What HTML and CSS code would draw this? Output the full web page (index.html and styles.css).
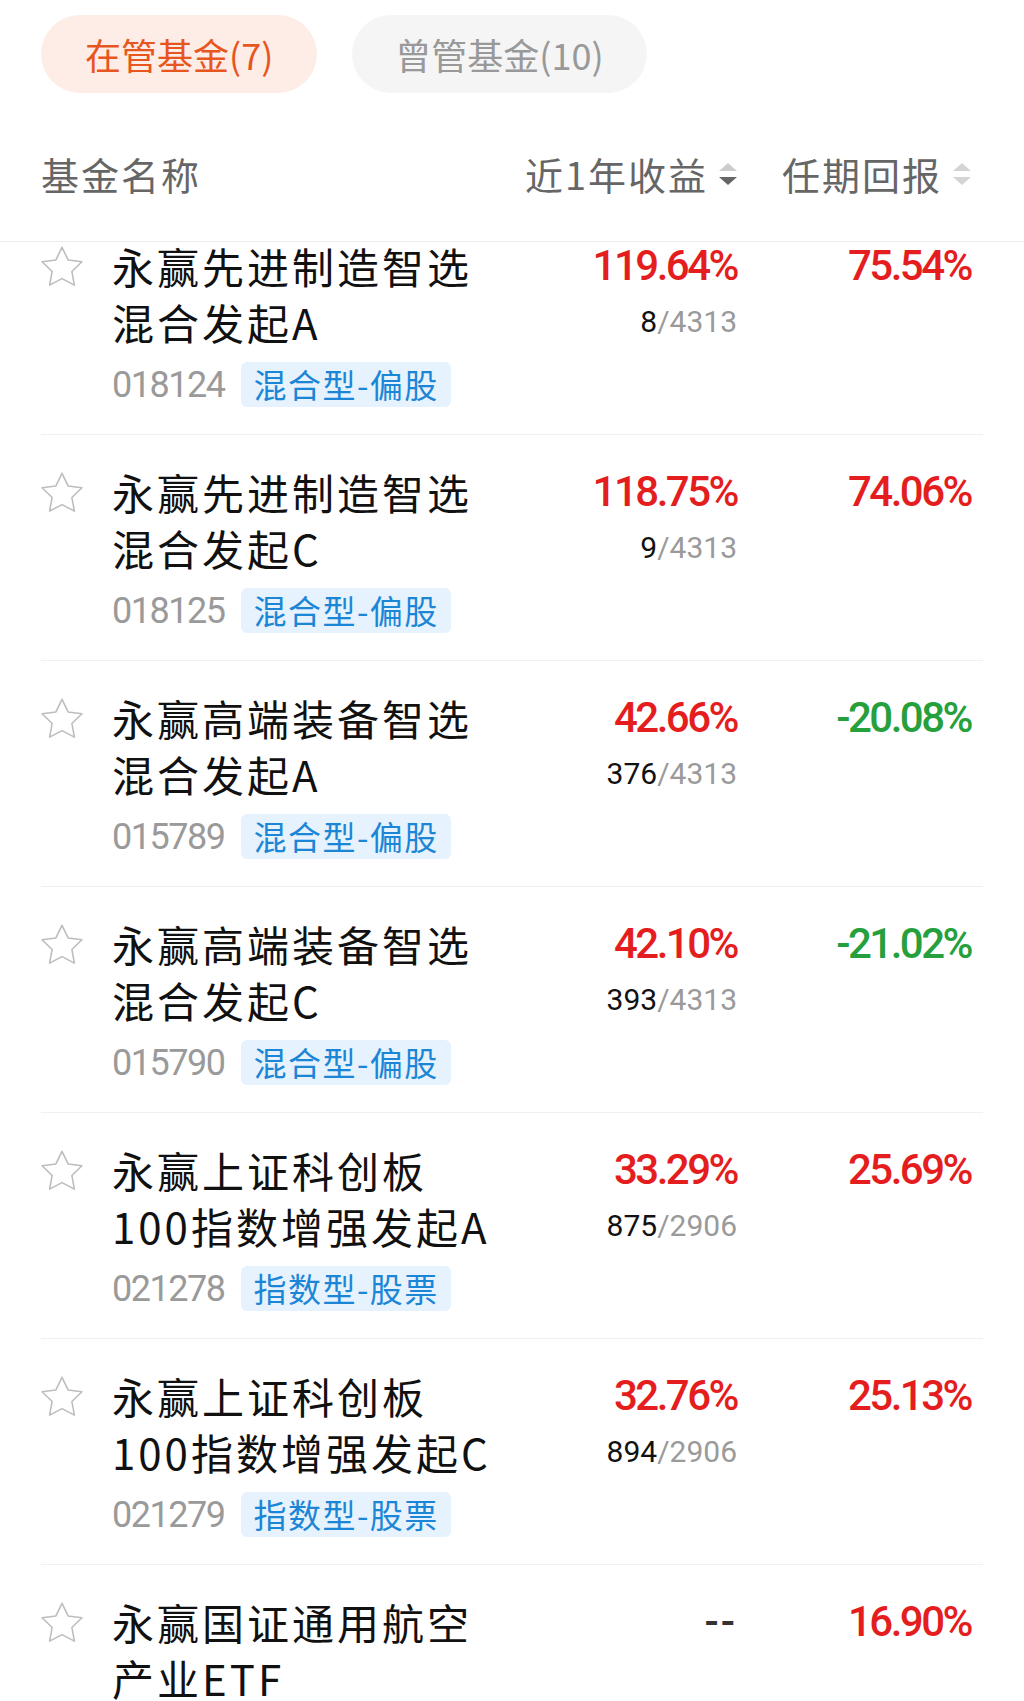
FILE: index.html
```html
<!DOCTYPE html>
<html lang="zh-CN">
<head>
    <meta charset="UTF-8">
    <meta name="viewport" content="width=device-width, initial-scale=1.0">
    <title>基金经理 - 管理基金</title>
    <link rel="stylesheet" href="styles.css">
</head>
<body>
    <header class="top">
        <div class="tabs">
            <span class="tab activo">在管基金(7)</span>
            <span class="tab">曾管基金(10)</span>
        </div>
        <div class="thead">
            <span class="h-name">基金名称</span>
            <span class="h-col">近1年收益
                <svg class="sort" viewBox="0 0 18 22"><path d="M9 0L18 8H0z" fill="#cccccc"/><path d="M0 14H18L9 22z" fill="#666666"/></svg>
            </span>
            <span class="h-col h-ret">任期回报
                <svg class="sort" viewBox="0 0 18 22"><path d="M9 0L18 8H0z" fill="#d4d4d4"/><path d="M0 14H18L9 22z" fill="#d4d4d4"/></svg>
            </span>
        </div>
    </header>

    <div class="lista">
        <div class="row">
            <div class="star"><svg viewBox="2 2 20 19"><path d="M12 2.6l2.9 6 6.6.9-4.8 4.6 1.2 6.5L12 17.5l-5.9 3.1 1.2-6.5-4.8-4.6 6.6-.9z"/></svg></div>
            <div class="info">
                <div class="name">永赢先进制造智选<br>混合发起A</div>
                <div class="meta"><span class="code">018124</span><span class="tag">混合型-偏股</span></div>
            </div>
            <div class="col"><div class="val up">119.64%</div><div class="rank"><b>8</b>/4313</div></div>
            <div class="col ret"><div class="val up">75.54%</div></div>
        </div>

        <div class="row">
            <div class="star"><svg viewBox="2 2 20 19"><path d="M12 2.6l2.9 6 6.6.9-4.8 4.6 1.2 6.5L12 17.5l-5.9 3.1 1.2-6.5-4.8-4.6 6.6-.9z"/></svg></div>
            <div class="info">
                <div class="name">永赢先进制造智选<br>混合发起C</div>
                <div class="meta"><span class="code">018125</span><span class="tag">混合型-偏股</span></div>
            </div>
            <div class="col"><div class="val up">118.75%</div><div class="rank"><b>9</b>/4313</div></div>
            <div class="col ret"><div class="val up">74.06%</div></div>
        </div>

        <div class="row">
            <div class="star"><svg viewBox="2 2 20 19"><path d="M12 2.6l2.9 6 6.6.9-4.8 4.6 1.2 6.5L12 17.5l-5.9 3.1 1.2-6.5-4.8-4.6 6.6-.9z"/></svg></div>
            <div class="info">
                <div class="name">永赢高端装备智选<br>混合发起A</div>
                <div class="meta"><span class="code">015789</span><span class="tag">混合型-偏股</span></div>
            </div>
            <div class="col"><div class="val up">42.66%</div><div class="rank"><b>376</b>/4313</div></div>
            <div class="col ret"><div class="val down">-20.08%</div></div>
        </div>

        <div class="row">
            <div class="star"><svg viewBox="2 2 20 19"><path d="M12 2.6l2.9 6 6.6.9-4.8 4.6 1.2 6.5L12 17.5l-5.9 3.1 1.2-6.5-4.8-4.6 6.6-.9z"/></svg></div>
            <div class="info">
                <div class="name">永赢高端装备智选<br>混合发起C</div>
                <div class="meta"><span class="code">015790</span><span class="tag">混合型-偏股</span></div>
            </div>
            <div class="col"><div class="val up">42.10%</div><div class="rank"><b>393</b>/4313</div></div>
            <div class="col ret"><div class="val down">-21.02%</div></div>
        </div>

        <div class="row">
            <div class="star"><svg viewBox="2 2 20 19"><path d="M12 2.6l2.9 6 6.6.9-4.8 4.6 1.2 6.5L12 17.5l-5.9 3.1 1.2-6.5-4.8-4.6 6.6-.9z"/></svg></div>
            <div class="info">
                <div class="name">永赢上证科创板<br>100指数增强发起A</div>
                <div class="meta"><span class="code">021278</span><span class="tag">指数型-股票</span></div>
            </div>
            <div class="col"><div class="val up">33.29%</div><div class="rank"><b>875</b>/2906</div></div>
            <div class="col ret"><div class="val up">25.69%</div></div>
        </div>

        <div class="row">
            <div class="star"><svg viewBox="2 2 20 19"><path d="M12 2.6l2.9 6 6.6.9-4.8 4.6 1.2 6.5L12 17.5l-5.9 3.1 1.2-6.5-4.8-4.6 6.6-.9z"/></svg></div>
            <div class="info">
                <div class="name">永赢上证科创板<br>100指数增强发起C</div>
                <div class="meta"><span class="code">021279</span><span class="tag">指数型-股票</span></div>
            </div>
            <div class="col"><div class="val up">32.76%</div><div class="rank"><b>894</b>/2906</div></div>
            <div class="col ret"><div class="val up">25.13%</div></div>
        </div>

        <div class="row">
            <div class="star"><svg viewBox="2 2 20 19"><path d="M12 2.6l2.9 6 6.6.9-4.8 4.6 1.2 6.5L12 17.5l-5.9 3.1 1.2-6.5-4.8-4.6 6.6-.9z"/></svg></div>
            <div class="info">
                <div class="name">永赢国证通用航空<br>产业ETF</div>
            </div>
            <div class="col"><div class="val nada">--</div></div>
            <div class="col ret"><div class="val up">16.90%</div></div>
        </div>
    </div>
</body>
</html>
```

FILE: styles.css
```css
body {
    margin: 0;
    background-color: #fff;
    font-family: "Noto Sans CJK SC", "Noto Sans", sans-serif;
    color: #111;
    overflow: hidden;
}
.top {
    padding-top: 15px;
    border-bottom: 1px solid #ededed;
}
.tabs {
    display: flex;
    gap: 35px;
    padding: 0 41px;
}
.tab {
    height: 78px;
    line-height: 78px;
    padding: 0 43px;
    border-radius: 39px;
    font-size: 36px;
    background-color: #f5f5f5;
    color: #999;
}
.tab.activo {
    background-color: #fdede6;
    color: #e8561f;
    padding: 0 44px;
}
.thead {
    display: flex;
    align-items: center;
    margin-top: 53px;
    padding: 0 53px 39px 41px;
    font-size: 38px;
    letter-spacing: 2px;
    line-height: 56px;
    color: #666;
}
.h-name {
    flex: 1;
}
.h-col {
    width: 230px;
    display: flex;
    align-items: center;
    justify-content: flex-end;
}
.h-col.h-ret {
    width: 234px;
}
.sort {
    width: 18px;
    height: 22px;
    margin-left: 11px;
}
.lista {
    margin: 0 41px;
}
.row {
    display: flex;
    padding: 29px 12px 27px 0;
    border-bottom: 1px solid #f0f0f0;
}
.row:first-child {
    padding-top: 0;
    margin-top: -4px;
}
.star {
    width: 42px;
    height: 56px;
    margin-right: 29px;
    display: flex;
    align-items: center;
}
.star svg {
    width: 42px;
    height: 40px;
    overflow: visible;
    fill: none;
    stroke: #bdbdbd;
    stroke-width: 0.75;
    stroke-linejoin: round;
}
.info {
    flex: 1;
}
.name {
    font-size: 42px;
    letter-spacing: 3px;
    line-height: 56px;
    color: #111;
}
.meta {
    display: flex;
    align-items: center;
    height: 45px;
    margin-top: 12px;
}
.code {
    font-family: "Roboto", sans-serif;
    font-size: 36px;
    letter-spacing: -1.5px;
    color: #9a9a9a;
    margin-right: 17px;
}
.tag {
    height: 45px;
    line-height: 45px;
    padding: 0 12px;
    border-radius: 6px;
    background-color: #e6f2fd;
    color: #1c86d6;
    font-size: 33px;
    letter-spacing: 1.5px;
}
.col {
    width: 230px;
    text-align: right;
}
.col.ret {
    width: 234px;
}
.val {
    font-family: "Roboto", sans-serif;
    font-weight: 500;
    font-size: 42px;
    letter-spacing: -2.5px;
    line-height: 56px;
}
.up {
    color: #e41e1e;
}
.down {
    color: #26a03c;
}
.nada {
    color: #333;
    letter-spacing: 2px;
}
.rank {
    font-family: "Roboto", sans-serif;
    font-size: 30px;
    line-height: 56px;
    color: #9a9a9a;
}
.rank b {
    font-weight: normal;
    color: #111;
}
```
